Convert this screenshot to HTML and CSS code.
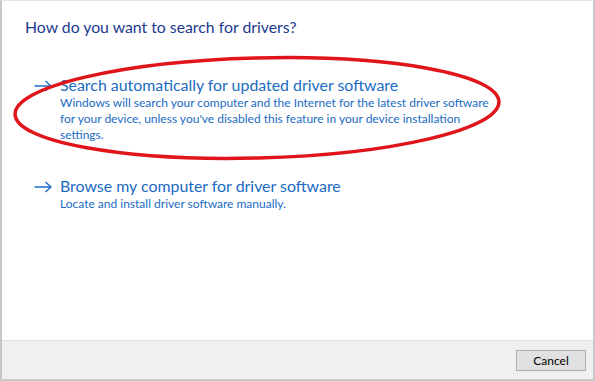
FILE: index.html
```html
<!DOCTYPE html>
<html lang="en">
<head>
    <meta charset="UTF-8">
    <title>Update Drivers</title>
    <link rel="stylesheet" href="styles.css">
</head>
<body>
    <div class="dialog">
        <div class="content">
            <h1 class="title">How do you want to search for drivers?</h1>

            <div class="option">
                <span class="arrow">
                    <svg width="18" height="12" viewBox="0 0 18 12"><path d="M0.5 6h16.5M11.5 1l5.5 5-5.5 5" fill="none" stroke="#1f6fc5" stroke-width="1.5"/></svg>
                </span>
                <div class="option-text">
                    <div class="option-title">Search automatically for updated driver software</div>
                    <div class="option-desc">Windows will search your computer and the Internet for the latest driver software for your device, unless you've disabled this feature in your device installation settings.</div>
                </div>
            </div>

            <div class="option second">
                <span class="arrow">
                    <svg width="18" height="12" viewBox="0 0 18 12"><path d="M0.5 6h16.5M11.5 1l5.5 5-5.5 5" fill="none" stroke="#1f6fc5" stroke-width="1.5"/></svg>
                </span>
                <div class="option-text">
                    <div class="option-title">Browse my computer for driver software</div>
                    <div class="option-desc">Locate and install driver software manually.</div>
                </div>
            </div>
        </div>

        <div class="footer">
            <button class="btn">Cancel</button>
        </div>

        <!-- red annotation ring -->
        <svg class="mark" width="595" height="381" viewBox="0 0 595 381">
            <ellipse cx="257" cy="108" rx="242" ry="50" transform="rotate(-1.5 257 108)" fill="none" stroke="#e0141b" stroke-width="3.5"/>
        </svg>
    </div>
</body>
</html>
```

FILE: styles.css
```css
body {
    margin: 0;
    font-family: Lato, "Open Sans", sans-serif;
    background-color: #fff;
}
.dialog {
    position: relative;
    width: 595px;
    height: 381px;
    box-sizing: border-box;
    border: 2px solid #c8c8c8;
    border-top: 1px solid #e4e4e4;
    display: flex;
    flex-direction: column;
    background-color: #fff;
}
.content {
    flex: 1;
    padding: 15px 0 0 23px;
}
.title {
    margin: 0;
    font-size: 15.8px;
    font-weight: normal;
    color: #1c3a8f;
    line-height: 22px;
}
.option {
    display: flex;
    align-items: flex-start;
    margin-top: 37px;
    padding-left: 9px;
}
.option.second {
    margin-top: 33px;
}
.arrow {
    width: 26px;
    padding-top: 5px;
    flex-shrink: 0;
}
.arrow svg {
    display: block;
}
.option-title {
    font-size: 15.9px;
    color: #1a6bc2;
    line-height: 20px;
}
.option-desc {
    font-size: 12px;
    color: #1a6bc2;
    line-height: 16px;
    width: 440px;
}
.footer {
    height: 38px;
    background-color: #f0f0f0;
    border-top: 1px solid #dfdfdf;
    display: flex;
    justify-content: flex-end;
    align-items: center;
    padding-right: 7px;
}
.btn {
    width: 70px;
    height: 21px;
    padding: 0;
    font-family: Lato, sans-serif;
    font-size: 12px;
    color: #000;
    background-color: #e1e1e1;
    border: 1px solid #adadad;
}
.mark {
    position: absolute;
    left: -2px;
    top: -1px;
    pointer-events: none;
}
```
